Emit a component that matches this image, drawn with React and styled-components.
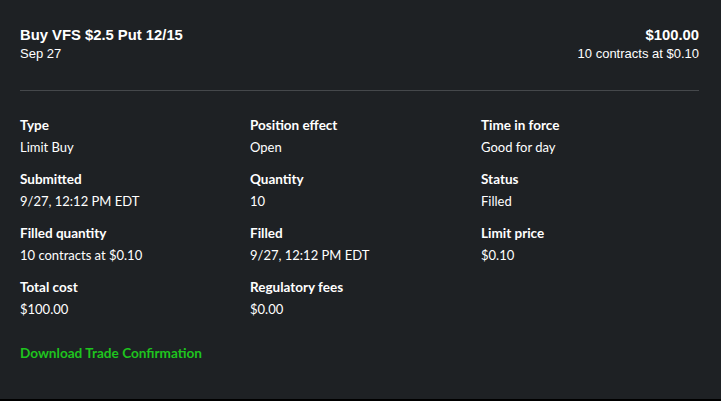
import React from "react";
import styled, { createGlobalStyle } from "styled-components";

const Global = createGlobalStyle`
  html, body { margin: 0; padding: 0; background: #000; }
  body { font-family: "Lato", "Noto Sans", sans-serif; }
`;

const fields = [
  ["Type", "Limit Buy"],
  ["Position effect", "Open"],
  ["Time in force", "Good for day"],
  ["Submitted", "9/27, 12:12 PM EDT"],
  ["Quantity", "10"],
  ["Status", "Filled"],
  ["Filled quantity", "10 contracts at $0.10"],
  ["Filled", "9/27, 12:12 PM EDT"],
  ["Limit price", "$0.10"],
  ["Total cost", "$100.00"],
  ["Regulatory fees", "$0.00"],
];

const App = () => {
  return (
    <>
      <Global />
      <Panel>
        <Header>
          <div>
            <Title>Buy VFS $2.5 Put 12/15</Title>
            <Sub>Sep 27</Sub>
          </div>
          <Right>
            <Title>$100.00</Title>
            <Sub>10 contracts at $0.10</Sub>
          </Right>
        </Header>
        <Grid>
          {fields.map(([label, value]) => (
            <Field key={label}>
              <Label>{label}</Label>
              <Value>{value}</Value>
            </Field>
          ))}
        </Grid>
        <Download href="#">Download Trade Confirmation</Download>
      </Panel>
    </>
  );
};

export default App;

const Panel = styled.div`
  width: 721px;
  height: 399px;
  box-sizing: border-box;
  background: #1e2124;
  color: #fff;
  padding: 26px 22px 0 20px;
`;

const Header = styled.div`
  display: flex;
  justify-content: space-between;
  font-family: "Liberation Sans", Arial, sans-serif;
  padding-bottom: 27px;
  border-bottom: 1px solid #45484b;
`;

const Right = styled.div`
  text-align: right;
`;

const Title = styled.div`
  font-size: 14.8px;
  font-weight: 700;
  line-height: 18px;
`;

const Sub = styled.div`
  font-size: 13px;
  line-height: 18px;
  margin-top: 1px;
`;

const Grid = styled.div`
  display: grid;
  grid-template-columns: 230px 231px 1fr;
  row-gap: 15px;
  padding-top: 26px;
`;

const Field = styled.div`
  display: flex;
  flex-direction: column;
  gap: 5px;
`;

const Label = styled.span`
  font-size: 13.5px;
  font-weight: 700;
  line-height: 17px;
`;

const Value = styled.span`
  font-size: 13px;
  line-height: 17px;
`;

const Download = styled.a`
  display: inline-block;
  margin-top: 27px;
  font-size: 13.6px;
  font-weight: 700;
  color: #1ec41e;
  text-decoration: none;
`;
